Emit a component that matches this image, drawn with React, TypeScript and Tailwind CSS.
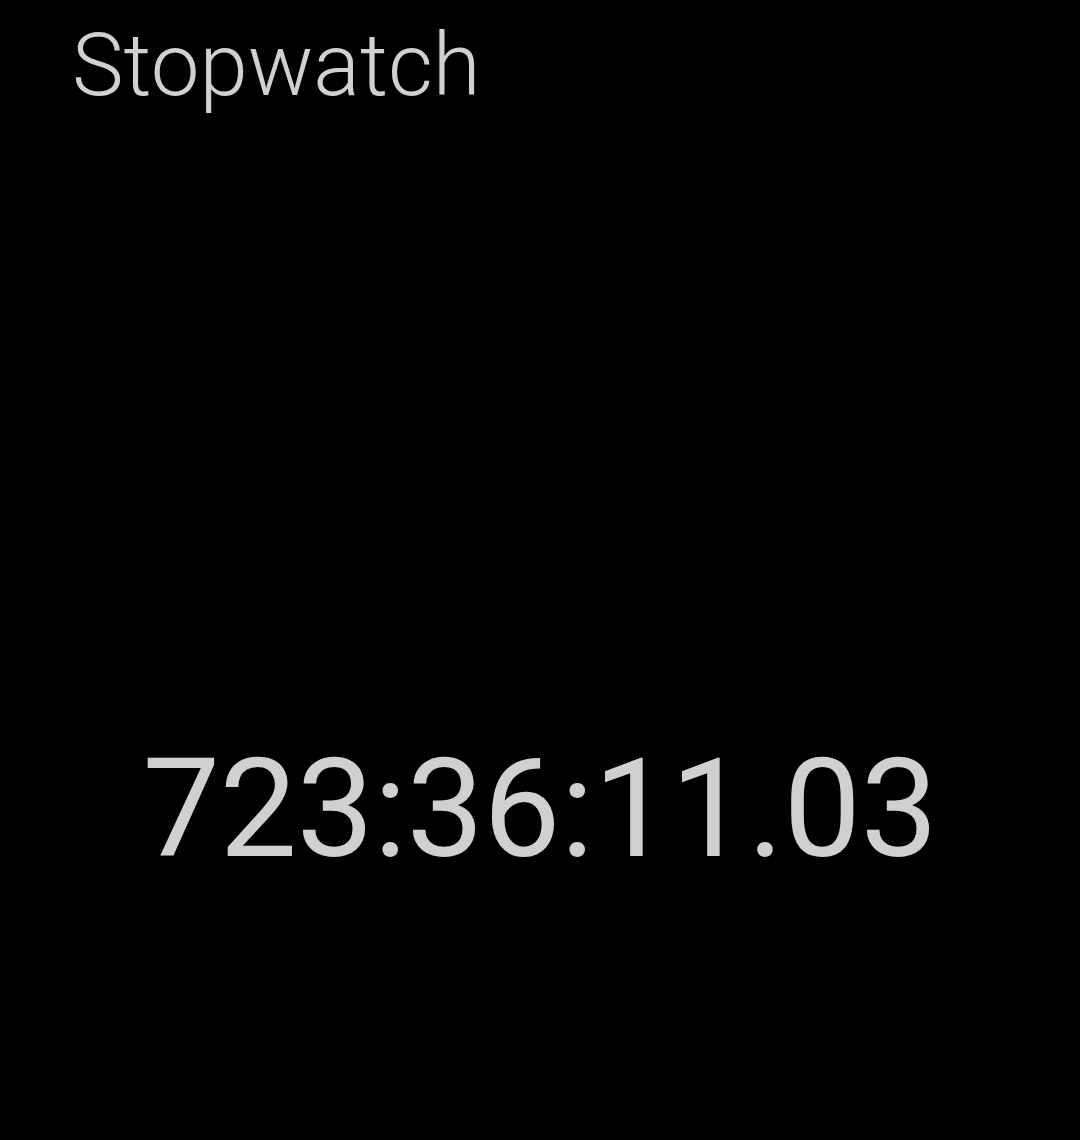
export default function App() {
  return (
    <div className="w-[1080px] h-[1140px] bg-black flex flex-col" style={{ fontFamily: "Roboto, 'Noto Sans', sans-serif" }}>
      <header className="pl-[72px] pt-[13px]">
        <h1 className="text-[87px] leading-[104px] font-light text-[#d0d0d0]">Stopwatch</h1>
      </header>
      <main className="flex-1 flex flex-col items-center pt-[617px]">
        <div className="text-[138px] leading-[150px] font-normal text-[#d0d0d0] tabular-nums tracking-[-0.5px]">723:36:11.03</div>
      </main>
    </div>
  );
}
